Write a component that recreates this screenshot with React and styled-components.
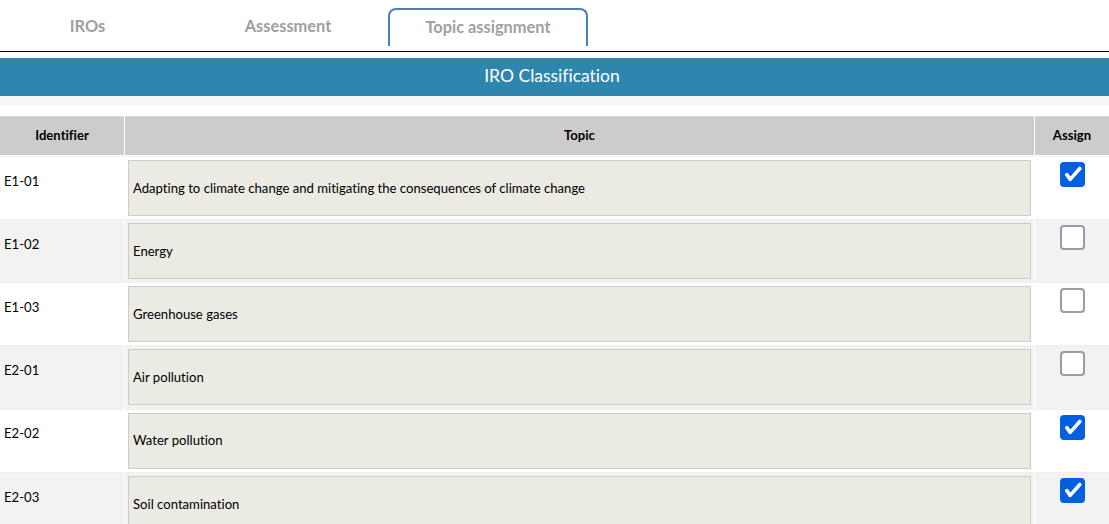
import React from "react";
import styled, { createGlobalStyle } from "styled-components";

const Global = createGlobalStyle`
  html, body { margin: 0; padding: 0; background: #fff; }
  body {
    font-family: Lato, "Liberation Sans", sans-serif;
    font-variant-ligatures: none;
    color: #000;
    overflow: hidden;
    height: 524px;
  }
`;

const Page = styled.div`
  width: 1109px;
  height: 524px;
  overflow: hidden;
`;

const TabBar = styled.div`
  display: flex;
  height: 52px;
  box-sizing: border-box;
  padding-top: 8px;
  border-bottom: 1px solid #000;
`;

const Tab = styled.div`
  width: ${(p) => p.$width}px;
  margin-right: ${(p) => p.$gap || 0}px;
  height: 38px;
  box-sizing: border-box;
  display: flex;
  align-items: center;
  justify-content: center;
  font-size: 16.4px;
  font-weight: 700;
  color: #a0a0a0;
  padding-bottom: ${(p) => (p.$active ? 4 : 5)}px;
  border: 2px solid ${(p) => (p.$active ? "#4682b4" : "transparent")};
  border-bottom: 0;
  border-radius: 8px 8px 0 0;
`;

const Banner = styled.div`
  margin-top: 6px;
  height: 38px;
  padding: 0 5px 3px 0;
  box-sizing: border-box;
  background: #2e86ae;
  color: #fff;
  font-size: 17.5px;
  font-weight: 400;
  display: flex;
  align-items: center;
  justify-content: center;
`;

const Strip = styled.div`
  height: 9px;
  background: #f6f6f6;
  margin-bottom: 11px;
`;

const Table = styled.div`
  display: grid;
  grid-template-columns: 124px 1fr 74px;
  column-gap: 1px;
  background: #fff;
`;

const Head = styled.div`
  height: 38.8px;
  padding-bottom: 2px;
  background: #cccccc;
  border-top: 1px solid #d9d9d9;
  box-sizing: border-box;
  display: flex;
  align-items: center;
  justify-content: center;
  font-size: 13.12px;
  font-weight: 700;
  margin-bottom: 1px;
`;

const Cell = styled.div`
  height: 63.2px;
  box-sizing: border-box;
  background: ${(p) => (p.$odd ? "#f2f2f2" : "#fff")};
  border-top: 1px solid #efefef;
`;

const IdCell = styled(Cell)`
  font-size: 13.12px;
  padding: 15.8px 0 0 4px;
  line-height: 16px;
`;

const TopicCell = styled(Cell)`
  padding: 3px 3px 0 3px;
`;

const TopicBox = styled.div`
  height: 56px;
  box-sizing: border-box;
  background: #ebebe4;
  border: 1px solid #cccccc;
  display: flex;
  align-items: center;
  padding: 0 0 0.2px 4px;
  font-size: 13.12px;
`;

const AssignCell = styled(Cell)`
  display: flex;
  justify-content: center;
  padding-top: 5px;
`;

const CheckBox = styled.div`
  width: 25px;
  height: 25px;
  box-sizing: border-box;
  border-radius: 4px;
  background: ${(p) => (p.$checked ? "#0060df" : "#fff")};
  border: 2px solid ${(p) => (p.$checked ? "#0060df" : "#9a9aa8")};
  display: flex;
  align-items: center;
  justify-content: center;
`;

const rows = [
  ["E1-01", "Adapting to climate change and mitigating the consequences of climate change", true],
  ["E1-02", "Energy", false],
  ["E1-03", "Greenhouse gases", false],
  ["E2-01", "Air pollution", false],
  ["E2-02", "Water pollution", true],
  ["E2-03", "Soil contamination", true],
];

const Tick = () => (
  <svg width="19" height="16" viewBox="0 0 19 16" fill="none">
    <path d="M3.8 8.6 L7.2 13.4 L16.8 2.5" stroke="#fff" strokeWidth="3.6" strokeLinecap="round" strokeLinejoin="round" />
  </svg>
);

export default function App() {
  return (
    <Page>
      <Global />
      <TabBar>
        <Tab $width={175} $gap={13}>IROs</Tab>
        <Tab $width={200}>Assessment</Tab>
        <Tab $width={200} $active>Topic assignment</Tab>
      </TabBar>
      <Banner>IRO Classification</Banner>
      <Strip />
      <Table>
        <Head>Identifier</Head>
        <Head>Topic</Head>
        <Head>Assign</Head>
        {rows.map(([id, topic, checked], i) => (
          <React.Fragment key={id}>
            <IdCell $odd={i % 2 === 1}>{id}</IdCell>
            <TopicCell $odd={i % 2 === 1}>
              <TopicBox>{topic}</TopicBox>
            </TopicCell>
            <AssignCell $odd={i % 2 === 1}>
              <CheckBox $checked={checked}>{checked && <Tick />}</CheckBox>
            </AssignCell>
          </React.Fragment>
        ))}
      </Table>
    </Page>
  );
}
